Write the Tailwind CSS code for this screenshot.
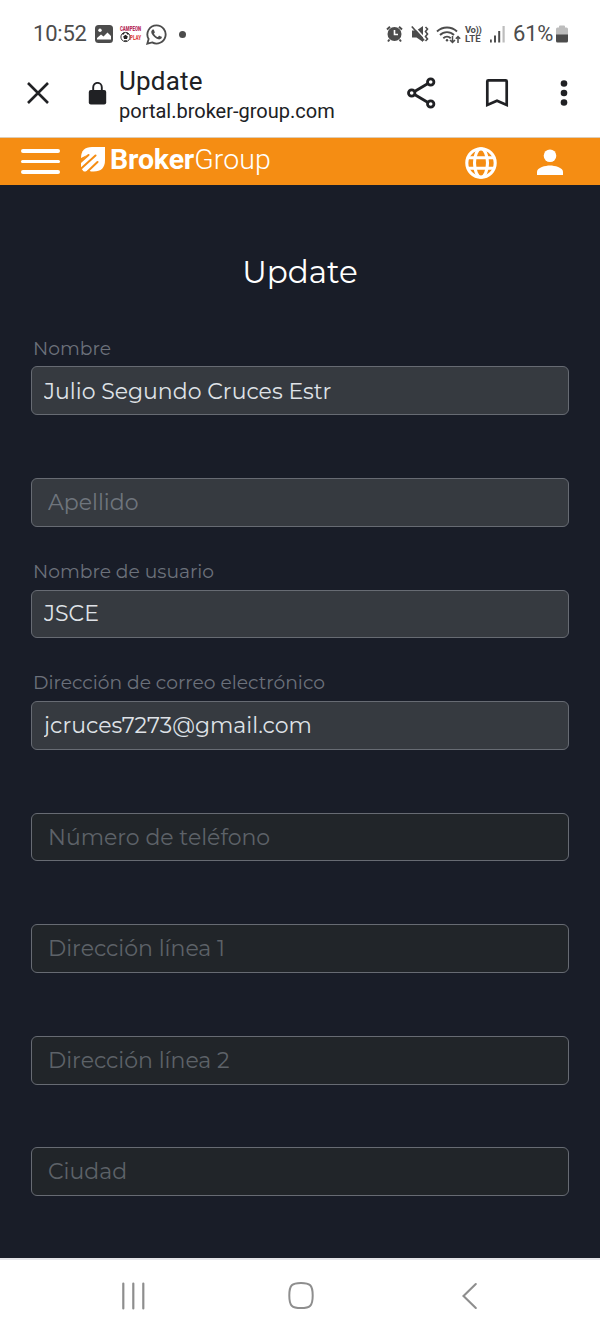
<!DOCTYPE html>
<html lang="es">
<head>
    <meta charset="UTF-8">
    <meta name="viewport" content="width=device-width, initial-scale=1.0">
    <title>Update</title>
    <script src="https://cdn.jsdelivr.net/npm/@tailwindcss/browser@4"></script>
</head>
<body class="w-[600px] h-[1333px] overflow-hidden flex flex-col bg-[#191d28] font-['Montserrat','Inter',sans-serif]">

    <!-- Barra de estado -->
    <div class="h-[68px] shrink-0 bg-white flex items-center pl-[33px] pr-[32px] font-['Roboto',sans-serif] text-[#4c4c4c]">
        <span class="text-[22px] leading-6 w-[54px] whitespace-nowrap tracking-[-0.2px]">10:52</span>
        <svg class="ml-2 w-[18px] h-[18px]" viewBox="0 0 18 18">
            <rect width="18" height="18" rx="3.5" fill="#4c4c4c"/>
            <circle cx="5" cy="5.3" r="1.7" fill="#fff"/>
            <path d="M2 14.500v-1.500l4-3.500 2.500 2 4-4 3.500 3.500v3.500z" fill="#fff"/>
        </svg>
        <svg class="ml-[7px] w-[21px] h-[18px] overflow-visible" viewBox="0 0 21 18">
            <text x="0" y="6" textLength="21" lengthAdjust="spacingAndGlyphs" font-family="Roboto" font-weight="900" font-size="7" fill="#b52b59">CAMPEON</text>
            <circle cx="5.5" cy="12" r="4.6" fill="#fff" stroke="#333" stroke-width="1"/>
            <path d="M5.5 9.8l2.3 1.7-.9 2.6H4.1l-.9-2.6zM2 8.6l2-1 .5 1-1.5 1.3zM9 8.6L7 7.6l-.5 1L8 9.900zM4 15.200h3l-.5 1.300h-2z" fill="#222"/>
            <text x="10" y="14.500" textLength="11" lengthAdjust="spacingAndGlyphs" font-family="Roboto" font-weight="900" font-size="7" fill="#e04848">PLAY</text>
        </svg>
        <svg class="ml-[5px] w-[21px] h-[21px]" viewBox="0 0 24 24" fill="#4c4c4c">
            <path d="M17.472 14.382c-.297-.149-1.758-.867-2.03-.967-.273-.099-.471-.148-.67.15-.197.297-.767.966-.94 1.164-.173.199-.347.223-.644.075-.297-.15-1.255-.463-2.390-1.475-.883-.788-1.480-1.761-1.653-2.059-.173-.297-.018-.458.130-.606.134-.133.298-.347.446-.520.149-.174.198-.298.298-.497.099-.198.050-.371-.025-.520-.075-.149-.669-1.612-.916-2.207-.242-.579-.487-.500-.669-.510-.173-.008-.371-.010-.570-.010-.198 0-.520.074-.792.372-.272.297-1.040 1.016-1.040 2.479 0 1.462 1.065 2.875 1.213 3.074.149.198 2.096 3.200 5.077 4.487.709.306 1.262.489 1.694.625.712.227 1.360.195 1.871.118.571-.085 1.758-.719 2.006-1.413.248-.694.248-1.289.173-1.413-.074-.124-.272-.198-.570-.347z"/>
            <path d="M12 1.500a10.400 10.400 0 00-9 15.600L1.500 22.500 7 21A10.400 10.400 0 1012 1.500z" fill="none" stroke="#4c4c4c" stroke-width="2.100"/>
        </svg>
        <span class="ml-[12px] size-[7px] rounded-full bg-[#4c4c4c]"></span>

        <!-- Alarma -->
        <svg class="ml-auto w-[17px] h-[18px]" viewBox="0 0 17 18">
            <circle cx="8.500" cy="9" r="7" fill="#4c4c4c"/>
            <path d="M1 4.500L4 1.800M16 4.500L13 1.800M3.500 14.500L2 16.500M13.500 14.500L15 16.500" stroke="#4c4c4c" stroke-width="2"/>
            <path d="M8.500 5v4.500h3.500" fill="none" stroke="#fff" stroke-width="1.600"/>
        </svg>
        <!-- Silencio con vibración -->
        <svg class="ml-[8px] w-[18px] h-[18px]" viewBox="0 0 18 18">
            <path d="M1 5.500h4.500L12 1v16L5.500 12.500H1z" fill="#4c4c4c"/>
            <path d="M2.500 1l11 12" stroke="#fff" stroke-width="1.600"/>
            <path d="M.8 1.500l12.400 14" stroke="#4c4c4c" stroke-width="1.700"/>
            <path d="M14.500 2l2 2-2 2.500 2 2.500-2 2.500 2 2.500-2 2" fill="none" stroke="#4c4c4c" stroke-width="1.600"/>
        </svg>
        <!-- Wifi -->
        <svg class="ml-[7px] w-[25px] h-[19px]" viewBox="0 0 25 19" fill="none" stroke="#4c4c4c" stroke-width="1.900">
            <path d="M1 6.500a14.500 14.500 0 0120 0M4 10a10 10 0 0114 0M7.300 13.200a5.500 5.500 0 017.400 0"/>
            <circle cx="11" cy="15.300" r="1.200" fill="#4c4c4c" stroke="none"/>
            <path d="M16.500 11v6.500M14 15l2.500 2.500L19 15M22 18v-6.500M19.800 13.700L22 11.500l2.200 2.200" stroke-width="1.500"/>
        </svg>
        <div class="ml-[4px] w-[18px] flex flex-col font-bold text-[9.500px] leading-[9px] whitespace-nowrap">
            <span class="tracking-[-0.4px]">Vo))</span>
            <span class="tracking-[0.2px]">LTE</span>
        </div>
        <svg class="ml-[7px] w-[15px] h-[17px]" viewBox="0 0 15 17" fill="#4c4c4c">
            <rect x="0" y="13.500" width="1.800" height="3"/>
            <rect x="4" y="9.500" width="2" height="7"/>
            <rect x="8.200" y="5" width="2" height="11.500"/>
            <rect x="12.500" y="0" width="2.200" height="16.500" fill="#bdbdbd"/>
        </svg>
        <span class="ml-[8px] text-[22px] leading-6 w-[39px] whitespace-nowrap tracking-[-0.2px]">61%</span>
        <svg class="ml-[4px] w-[12px] h-[18px]" viewBox="0 0 12 18">
            <path d="M3 1.500Q3 .500 4 .500h4Q9 .500 9 1.500v1h1.500Q12 2.500 12 4v6H0V4Q0 2.500 1.500 2.500H3z" fill="#bdbdbd"/>
            <path d="M0 9.500h12V16q0 1.500-1.500 1.500h-9Q0 17.500 0 16z" fill="#4c4c4c"/>
        </svg>
    </div>

    <!-- Barra del navegador -->
    <div class="h-[70px] shrink-0 bg-white border-b border-[#dccdb8] flex items-center font-['Roboto',sans-serif] text-[#202124] pb-[19px]">
        <svg class="ml-[27px] w-[22px] h-[22px]" viewBox="0 0 22 22" fill="none" stroke="#202124" stroke-width="2.600">
            <path d="M1 1l20 20M21 1L1 21"/>
        </svg>
        <svg class="ml-[39px] w-[19px] h-[23px]" viewBox="0 0 19 23">
            <rect x=".8" y="8" width="17.400" height="14.500" rx="2" fill="#202124"/>
            <path d="M5.200 9V5.200a4.300 4.300 0 018.600 0V9" fill="none" stroke="#202124" stroke-width="1.900"/>
        </svg>
        <div class="ml-3 w-[288px] pt-1 whitespace-nowrap">
            <div class="text-[26px] leading-[32px] tracking-[0.2px]">Update</div>
            <div class="text-[20px] leading-[29px]">portal.broker-group.com</div>
        </div>
        <svg class="w-[29px] h-[32px]" viewBox="0 0 29 32" fill="none" stroke="#202124" stroke-width="2.800">
            <path d="M5 16l18.500-11M5 16l18.500 11"/>
            <circle cx="4.700" cy="16" r="3.200" fill="#fff"/>
            <circle cx="23.700" cy="5" r="3.200" fill="#fff"/>
            <circle cx="23.700" cy="27" r="3.200" fill="#fff"/>
        </svg>
        <svg class="ml-[49px] w-[24px] h-[30px]" viewBox="0 0 24 30" fill="none" stroke="#202124" stroke-width="2.700">
            <path d="M2.300 27V3.300q0-1 1-1h17.400q1 0 1 1V27L12 22.800z"/>
        </svg>
        <svg class="ml-[51px] w-[8px] h-[26px]" viewBox="0 0 8 26" fill="#202124">
            <circle cx="4" cy="3.500" r="3.300"/>
            <circle cx="4" cy="13" r="3.300"/>
            <circle cx="4" cy="22.500" r="3.300"/>
        </svg>
    </div>

    <!-- Cabecera del portal -->
    <header class="h-[47px] shrink-0 bg-[#f58d13] flex items-start font-['Roboto',sans-serif] text-white">
        <div class="ml-[21px] mt-[11px] w-[39px] flex flex-col gap-[7px]">
            <span class="h-[3.500px] rounded-full bg-white"></span>
            <span class="h-[3.500px] rounded-full bg-white"></span>
            <span class="h-[3.500px] rounded-full bg-white"></span>
        </div>
        <svg class="ml-[21px] mt-[9px] w-[24px] h-[25px]" viewBox="0 0 24 25">
            <path d="M0 24V11Q0 0 11 0H24V13Q24 24.500 12.500 24.500H0z" fill="#fff"/>
            <g stroke="#f58d13" stroke-width="2" fill="none" stroke-linecap="round">
                <path d="M-1 15.500L7.500 8M-1 22.500L14.500 8.500M5.500 25.500L16.500 15"/>
            </g>
            <path d="M0 11l6-3-6 6zM0 21v4h3zM5 25h5l-2-2z" fill="#f58d13"/>
        </svg>
        <div class="ml-[5px] mt-[6px] w-[162px] text-[28.500px] leading-8 whitespace-nowrap"><span class="font-bold tracking-[-0.150px]">Broker</span><span class="font-light tracking-[0.100px]">Group</span></div>
        <svg class="ml-[193px] mt-[9px] w-[32px] h-[32px]" viewBox="0 0 32 32" fill="none" stroke="#fff" stroke-width="3.100">
            <circle cx="16" cy="16" r="14.200"/>
            <ellipse cx="16" cy="16" rx="6.500" ry="14.200"/>
            <path d="M3 10.700h26M3 21.300h26"/>
        </svg>
        <svg class="ml-[40px] mt-[11px] w-[26px] h-[26px]" viewBox="0 0 26 26" fill="#fff">
            <circle cx="13" cy="6.800" r="6.300"/>
            <path d="M0 26v-3.200C0 18.500 8.500 16.500 13 16.500s13 2 13 6.300V26z"/>
        </svg>
    </header>

    <!-- Formulario -->
    <main class="flex-1 px-[31px] text-[22px]">
        <h1 class="pt-[66px] h-[118.500px] text-center text-white text-[31px] leading-[42px]">Update</h1>
        <form>
            <div class="h-[111.600px] flex flex-col">
                <label for="nombre" class="h-[63px] pt-[34px] pl-[2px] text-[18.700px] leading-[22px] text-[#6c717b]">Nombre</label>
                <input id="nombre" type="text" value="Julio Segundo Cruces Estr" class="h-[49px] w-full pl-3 pt-[2px] border border-[#676b73] rounded-[6px] bg-[#363a40] text-[#dfe2e7]">
            </div>
            <div class="h-[111.600px] flex flex-col">
                <div class="h-[63px]"></div>
                <input id="apellido" type="text" placeholder="Apellido" class="h-[49px] w-full pl-4 border border-[#676b73] rounded-[6px] bg-[#363a40] placeholder:text-[#6f757d]">
            </div>
            <div class="h-[111.600px] flex flex-col">
                <label for="usuario" class="h-[63px] pt-[34px] pl-[2px] text-[18.700px] leading-[22px] text-[#6c717b]">Nombre de usuario</label>
                <input id="usuario" type="text" value="JSCE" class="h-[49px] w-full pl-3 border border-[#676b73] rounded-[6px] bg-[#363a40] text-[#dfe2e7]">
            </div>
            <div class="h-[111.600px] flex flex-col">
                <label for="correo" class="h-[63px] pt-[34px] pl-[2px] text-[18.700px] leading-[22px] text-[#6c717b]">Dirección de correo electrónico</label>
                <input id="correo" type="email" value="jcruces7273@gmail.com" class="h-[49px] w-full pl-3 border border-[#676b73] rounded-[6px] bg-[#363a40] text-[#dfe2e7]">
            </div>
            <div class="h-[111.600px] flex flex-col">
                <div class="h-[63px]"></div>
                <input id="telefono" type="tel" placeholder="Número de teléfono" class="h-[49px] w-full pl-4 border border-[#676b73] rounded-[6px] bg-[#212529] placeholder:text-[#5d6268]">
            </div>
            <div class="h-[111.600px] flex flex-col">
                <div class="h-[63px]"></div>
                <input id="direccion1" type="text" placeholder="Dirección línea 1" class="h-[49px] w-full pl-4 border border-[#676b73] rounded-[6px] bg-[#212529] placeholder:text-[#5d6268]">
            </div>
            <div class="h-[111.600px] flex flex-col">
                <div class="h-[63px]"></div>
                <input id="direccion2" type="text" placeholder="Dirección línea 2" class="h-[49px] w-full pl-4 border border-[#676b73] rounded-[6px] bg-[#212529] placeholder:text-[#5d6268]">
            </div>
            <div class="h-[111.600px] flex flex-col">
                <div class="h-[63px]"></div>
                <input id="ciudad" type="text" placeholder="Ciudad" class="h-[49px] w-full pl-4 border border-[#676b73] rounded-[6px] bg-[#212529] placeholder:text-[#5d6268]">
            </div>
        </form>
    </main>

    <!-- Navegación de Android -->
    <nav class="h-[75px] shrink-0 bg-white border-t-2 border-[#e4e4e8] flex items-center pb-[2px]">
        <svg class="ml-[121px] w-[25px] h-[28px]" viewBox="0 0 25 28" stroke="#8e8e8e" stroke-width="2.200" stroke-linecap="round">
            <path d="M2.300 1.500v25M12.300 1.500v25M22.300 1.500v25"/>
        </svg>
        <svg class="ml-[142px] w-[26px] h-[29px]" viewBox="0 0 26 29" fill="none" stroke="#8e8e8e" stroke-width="2">
            <path d="M13 2C22 2 24.700 4 24.700 14.500S22 27 13 27 1.300 25 1.300 14.500 4 2 13 2z"/>
        </svg>
        <svg class="ml-[147px] w-[17px] h-[30px]" viewBox="0 0 17 30" fill="none" stroke="#8e8e8e" stroke-width="2.100" stroke-linecap="round">
            <path d="M14.800 3L2.500 15l12.300 12"/>
        </svg>
    </nav>
</body>
</html>
